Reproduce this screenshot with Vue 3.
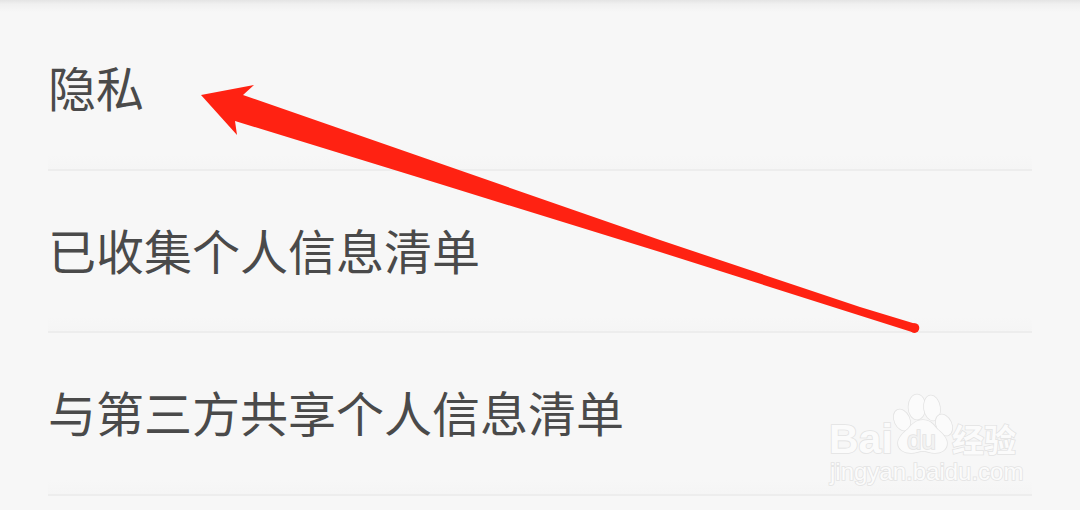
<script setup>
const rows = ['隐私', '已收集个人信息清单', '与第三方共享个人信息清单']
</script>

<template>
  <div class="page">
    <div class="shade"></div>
    <ul class="list">
      <li v-for="r in rows" :key="r" class="row"><span class="label">{{ r }}</span></li>
    </ul>
    <svg class="overlay" viewBox="0 0 1080 510" width="1080" height="510">
      <polygon fill="#ff2212" points="201,95 254,85 243,95 660,240 860,307 916,324 919,328 915,333 660,252 440,184 235,121 237,135" />
      <circle cx="914.5" cy="328" r="4.8" fill="#ff2212" />
      <g class="mark">
        <text x="829" y="453" class="bai">Bai</text>
        <ellipse cx="917" cy="407" rx="8.5" ry="12.5" />
        <ellipse cx="932" cy="408" rx="8" ry="12.5" transform="rotate(-8 932 408)" />
        <ellipse cx="902" cy="420" rx="7.5" ry="11" transform="rotate(-25 902 420)" />
        <ellipse cx="944" cy="425" rx="7.5" ry="11" transform="rotate(-25 944 425)" />
        <path d="M923 420c7 0 10 4 14 9 5 4 10 9 10 14 0 7-6 10-12 10-5 0-8-2-12-2s-7 2-12 2c-6 0-13-3-13-10 0-5 5-10 10-14 4-5 8-9 15-9z" />
        <text x="907" y="449" class="du">du</text>
        <text x="952" y="451.500" class="cn">经验</text>
        <text x="830" y="480" class="url">jingyan.baidu.com</text>
      </g>
    </svg>
  </div>
</template>

<style scoped>
.page {
  position: relative;
  width: 1080px;
  height: 510px;
  overflow: hidden;
  background: #f7f7f7;
  font-family: "Noto Sans CJK SC", "Noto Sans", sans-serif;
}
.shade {
  height: 12px;
  margin-bottom: -4px;
  background: linear-gradient(#e4e4e4, #f0f0f0 35%, #f7f7f7);
}
.list {
  list-style: none;
  margin: 0;
  padding: 0 48px;
}
.row {
  box-sizing: border-box;
  height: 162.5px;
  padding: 0 0 4px 0;
  display: flex;
  align-items: center;
  border-bottom: 2px solid #ededed;
  background: linear-gradient(transparent calc(100% - 14px), #f5f5f5);
}
.label {
  font-size: 48px;
  font-weight: 400;
  line-height: 1;
  color: #4a4a4a;
}
.overlay {
  position: absolute;
  top: 0;
  left: 0;
}
.mark > * {
  fill: #fbfbfb;
  stroke: #e3e3e3;
  stroke-width: 1.6;
  paint-order: stroke;
}
.mark text {
  font-family: "Liberation Sans", sans-serif;
}
.mark .bai {
  font-size: 41px;
  font-weight: 700;
}
.mark .du {
  font-size: 26px;
  fill: #f2f2f2;
}
.mark .cn {
  font-family: "Noto Sans CJK SC", sans-serif;
  font-size: 32px;
  font-weight: 700;
}
.mark .url {
  font-size: 24px;
}
</style>
